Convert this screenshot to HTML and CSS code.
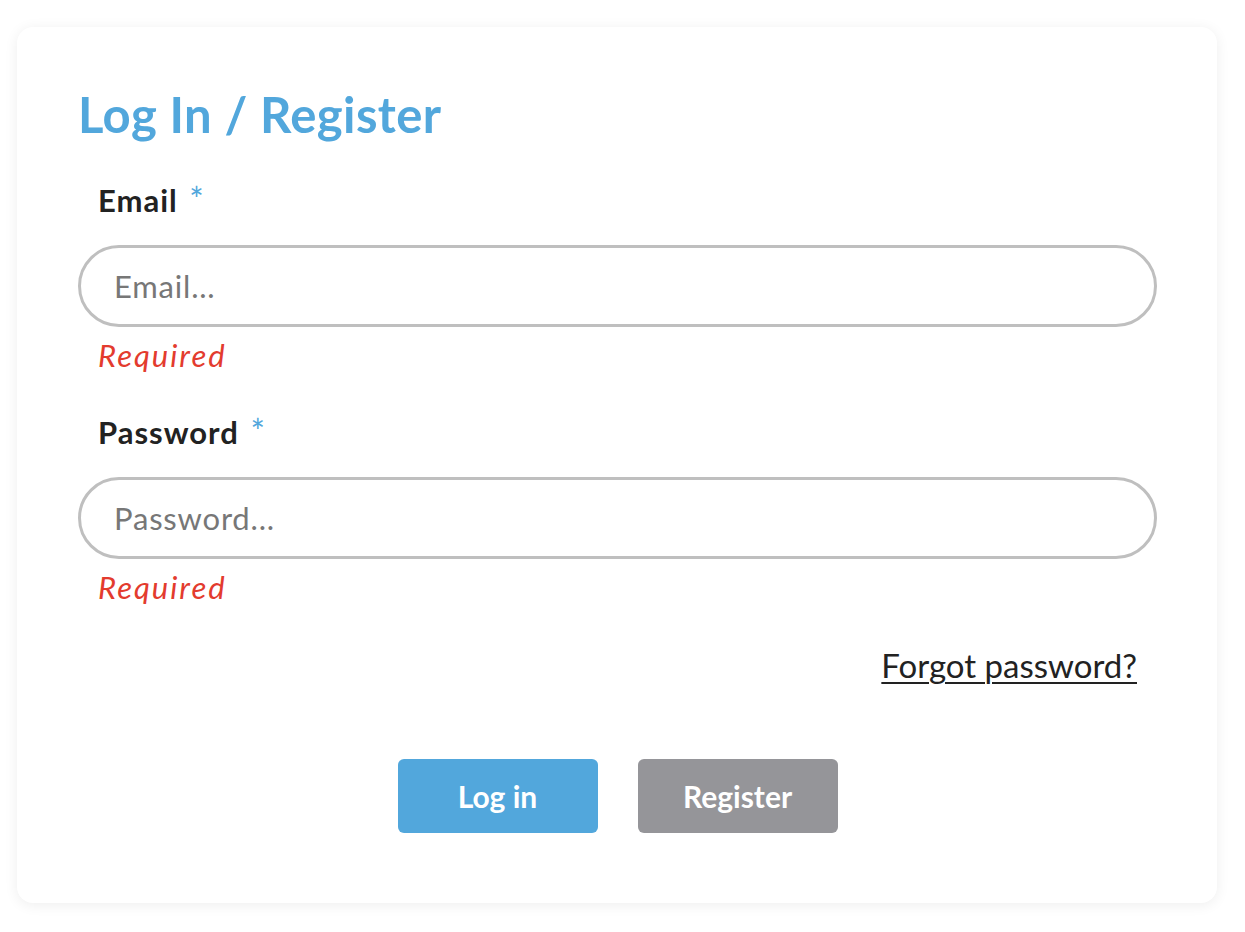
FILE: index.html
```html
<!DOCTYPE html>
<html lang="en">
<head>
<meta charset="utf-8">
<title>Log In / Register</title>
<link rel="stylesheet" href="styles.css">
</head>
<body>
<div class="card">
  <h1 class="title">Log In / Register</h1>
  <form class="form">
    <div class="field">
      <label class="label" for="email">Email <span class="req">*</span></label>
      <input class="input" id="email" type="text" placeholder="Email...">
      <div class="error">Required</div>
    </div>
    <div class="field">
      <label class="label" for="password">Password <span class="req">*</span></label>
      <input class="input" id="password" type="password" placeholder="Password...">
      <div class="error">Required</div>
    </div>
    <div class="forgot-row"><a class="forgot" href="#">Forgot password?</a></div>
    <div class="actions">
      <button type="button" class="btn btn-primary">Log in</button>
      <button type="button" class="btn btn-secondary">Register</button>
    </div>
  </form>
</div>
</body>
</html>
```
FILE: styles.css
```css
* { box-sizing: border-box; }
html, body { margin: 0; padding: 0; background: #ffffff; }
body {
  font-family: Lato, "Noto Sans", "Liberation Sans", sans-serif;
  color: #222222;
  padding: 27px 28px 29px 17px;
}
.card {
  width: 1200px;
  height: 876px;
  background: #ffffff;
  border-radius: 16px;
  box-shadow: 0 2px 14px rgba(0, 0, 0, 0.07);
  padding: 59px 60px 0 61px;
}
.title {
  margin: 0;
  font-family: Lato, "Noto Sans", sans-serif;
  font-weight: 700;
  font-size: 49px;
  line-height: 56px;
  color: #52a7dc;
  letter-spacing: 0.4px;
}
.form { display: flex; flex-direction: column; margin-top: 41px; }
.field { display: flex; flex-direction: column; }
.label {
  display: block;
  height: 34px;
  padding-left: 20px;
  font-size: 31px;
  font-weight: 700;
  line-height: 34px;
  letter-spacing: 1px;
  color: #222222;
}
.req {
  color: #52a7dc;
  font-weight: 400;
  font-size: 34px;
  line-height: 10px;
  margin-left: 3px;
}
.input {
  margin-top: 28px;
  height: 82px;
  width: 100%;
  border: 3px solid #bfbfbf;
  border-radius: 41px;
  padding: 0 33px;
  font-family: Lato, "Noto Sans", sans-serif;
  font-size: 31px;
  letter-spacing: 0.8px;
  color: #333;
  outline: none;
  background: #fff;
}
.input::placeholder { color: #777777; opacity: 1; }
.error {
  padding-left: 20px;
  margin-top: 10px;
  font-size: 31px;
  font-style: italic;
  line-height: 36px;
  letter-spacing: 2px;
  color: #e33b2e;
  margin-bottom: 42px;
}
.forgot-row { display: flex; justify-content: flex-end; padding-right: 20px; margin-top: -1px; }
.forgot {
  font-size: 33px;
  line-height: 38px;
  color: #222222;
  text-decoration: underline;
  text-underline-offset: 4px;
  text-decoration-thickness: 2px;
}
.actions {
  display: flex;
  justify-content: center;
  gap: 40px;
  margin-top: 75px;
}
.btn {
  width: 200px;
  height: 74px;
  border: none;
  border-radius: 6px;
  color: #ffffff;
  font-family: Lato, "Noto Sans", sans-serif;
  font-weight: 700;
  font-size: 30px;
  cursor: pointer;
  padding: 0;
}
.btn-primary { background: #52a7dc; }
.btn-secondary { background: #959599; }
```
